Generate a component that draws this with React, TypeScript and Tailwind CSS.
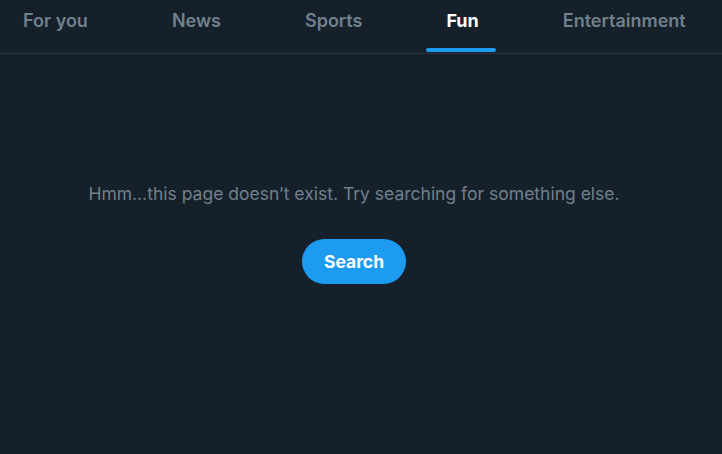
const TABS = ["For you", "News", "Sports", "Fun", "Entertainment"];

export default function App() {
  const active = "Fun";

  return (
    <div
      className="flex h-[454px] w-[722px] flex-col overflow-hidden bg-[#15202b]"
      style={{ fontFamily: "Inter, 'Noto Sans', sans-serif" }}
    >
      {/* Tabs */}
      <nav className="flex h-[54px] shrink-0 gap-[84px] overflow-hidden border-b border-[#2a3540] pl-[23px]">
        {TABS.map((t) => (
          <div key={t} className="relative flex shrink-0 items-start pt-[7px]">
            <span
              className={
                t === active
                  ? "text-[18px] font-bold text-white"
                  : "text-[18px] font-semibold text-[#71808d]"
              }
            >
              {t}
            </span>
            {t === active && (
              <span className="absolute bottom-[1px] left-1/2 h-[4px] w-[70px] -translate-x-[37px] rounded-full bg-[#1d9bf0]" />
            )}
          </div>
        ))}
      </nav>

      {/* Empty state */}
      <main className="flex flex-col items-center pr-[14px] pt-[127px]">
        <p className="text-[17.5px] text-[#71808d]">
          Hmm…this page doesn’t exist. Try searching for something else.
        </p>
        <button className="mt-[32px] flex h-[45px] w-[104px] items-center justify-center rounded-full bg-[#1d9bf0] text-[17.5px] font-bold text-white">
          Search
        </button>
      </main>
    </div>
  );
}
